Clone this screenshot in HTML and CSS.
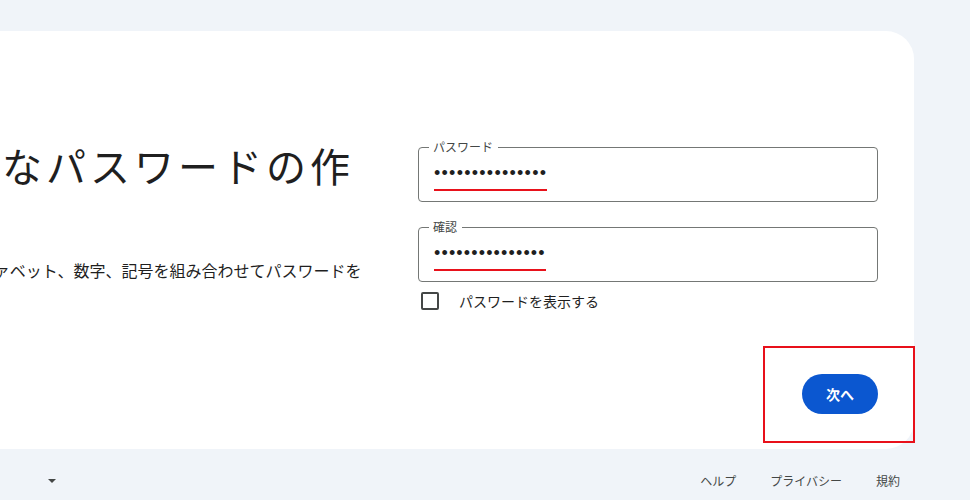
FILE: index.html
```html
<!DOCTYPE html>
<html lang="ja">
<head>
<meta charset="utf-8">
<title>強力なパスワードの作成</title>
<link rel="stylesheet" href="styles.css">
</head>
<body>
<div class="page">
  <main class="card">
    <div class="columns">
      <section class="intro">
        <h1 class="title">強力なパスワードの作成</h1>
        <p class="desc">半角アルファベット、数字、記号を組み合わせてパスワードを作成します</p>
      </section>
      <form class="form">
        <fieldset class="field">
          <legend class="field-label">パスワード</legend>
          <span class="dots">•••••••••••••••</span>
        </fieldset>
        <fieldset class="field field-second">
          <legend class="field-label">確認</legend>
          <span class="dots dots-short">•••••••••••••••</span>
        </fieldset>
        <label class="show">
          <span class="box"></span>
          <span class="show-text">パスワードを表示する</span>
        </label>
      </form>
    </div>
    <div class="actions">
      <div class="btn-wrap">
        <button type="button" class="next">次へ</button>
        <span class="mark"></span>
      </div>
    </div>
  </main>
  <footer class="footer">
    <div class="lang"><span class="lang-text">日本語</span><span class="caret"></span></div>
    <nav class="links">
      <a class="link">ヘルプ</a>
      <a class="link">プライバシー</a>
      <a class="link">規約</a>
    </nav>
  </footer>
</div>
</body>
</html>
```

FILE: styles.css
```css
html, body {
  margin: 0;
  padding: 0;
  overflow: hidden;
  background: #f0f4f9;
}
body {
  font-family: "Noto Sans CJK JP", "Noto Sans", sans-serif;
  color: #1f1f1f;
  height: 500px;
}
.page {
  margin-left: -130px;
  width: 1044px;
  padding-top: 31px;
}
.card {
  background: #ffffff;
  border-radius: 28px;
  padding: 108px 36px 35px 44px;
  height: 418px;
  box-sizing: border-box;
}
.columns {
  display: flex;
  align-items: flex-start;
  gap: 56px;
}
.intro {
  width: 448px;
  flex: none;
}
.title {
  margin: 0;
  font-size: 40px;
  line-height: 52px;
  font-weight: 400;
  letter-spacing: 4px;
  color: #1f1f1f;
}
.desc {
  margin: 15px 0 0;
  font-size: 16px;
  line-height: 24px;
  color: #1f1f1f;
}
.form {
  width: 460px;
  flex: none;
  display: flex;
  flex-direction: column;
}
.field {
  margin: 0;
  border: 1px solid #747775;
  border-radius: 4px;
  padding: 5px 14px 10px 15px;
  min-width: 0;
  box-sizing: border-box;
}
.field-second {
  margin-top: 17px;
}
.field-label {
  margin-left: -5px;
  padding: 0 5px 0 4px;
  font-size: 12px;
  line-height: 16px;
  color: #444746;
}
.dots {
  display: inline-block;
  font-family: "Liberation Sans", sans-serif;
  font-size: 18px;
  line-height: 24px;
  letter-spacing: 1.25px;
  color: #1f1f1f;
  padding-bottom: 4px;
  border-bottom: 2px solid #e8121b;
}
.dots-short {
  letter-spacing: 1.15px;
}
.show {
  display: flex;
  align-items: center;
  height: 24px;
  margin-top: 7px;
  padding-left: 3px;
}
.box {
  width: 18px;
  height: 18px;
  box-sizing: border-box;
  border: 2px solid #444746;
  border-radius: 2px;
  flex: none;
}
.show-text {
  margin-left: 20px;
  font-size: 14px;
  line-height: 20px;
  color: #1f1f1f;
}
.actions {
  display: flex;
  justify-content: flex-end;
  margin-top: 61px;
}
.btn-wrap {
  position: relative;
}
.next {
  width: 76px;
  height: 40px;
  border: none;
  border-radius: 20px;
  background: #0b57d0;
  color: #ffffff;
  font-family: "Noto Sans CJK JP", "Noto Sans", sans-serif;
  font-size: 14px;
  font-weight: 700;
  padding: 0;
  display: block;
}
.mark {
  position: absolute;
  top: -28px;
  left: -39px;
  right: -37px;
  bottom: -29px;
  border: 2px solid #e8101a;
  pointer-events: none;
}
.footer {
  display: flex;
  align-items: center;
  justify-content: space-between;
  padding: 24px 14px 0 0;
  font-size: 12px;
  line-height: 16px;
  color: #444746;
}
.lang {
  width: 186px;
  box-sizing: border-box;
  padding-left: 44px;
  display: flex;
  align-items: center;
  justify-content: space-between;
}
.caret {
  width: 0;
  height: 0;
  border-left: 4px solid transparent;
  border-right: 4px solid transparent;
  border-top: 4px solid #444746;
}
.links {
  display: flex;
  gap: 34px;
}
.link {
  color: #444746;
  text-decoration: none;
}
```
